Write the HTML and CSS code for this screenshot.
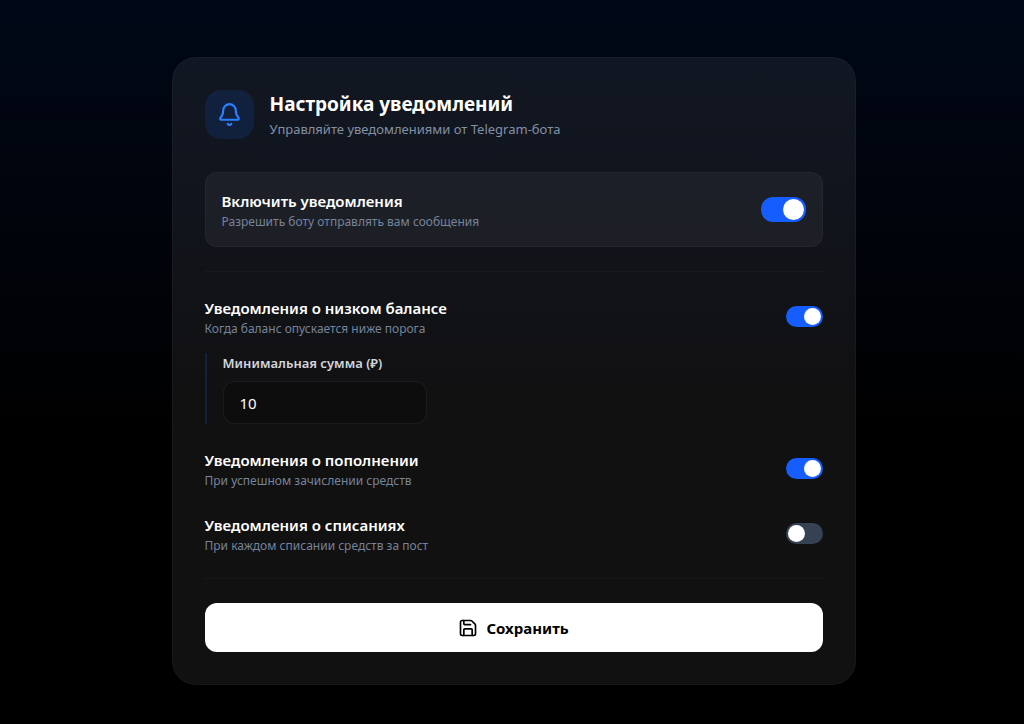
FILE: index.html
```
<!DOCTYPE html>
<html lang="ru">
<head>
    <meta charset="UTF-8">
    <meta name="viewport" content="width=device-width, initial-scale=1.0">
    <title>Настройка уведомлений</title>
    <link rel="stylesheet" href="styles.css">
</head>
<body>
<main class="card">
    <header class="header">
        <div class="header-icon">
            <svg width="25" height="25" viewBox="0 0 24 24" fill="none" stroke="currentColor" stroke-width="2" stroke-linecap="round" stroke-linejoin="round">
                <path d="M10.3 21a1.94 1.94 0 0 0 3.4 0"/>
                <path d="M3.262 15.326A1 1 0 0 0 4 17h16a1 1 0 0 0 .74-1.673C19.41 13.956 18 12.499 18 8A6 6 0 0 0 6 8c0 4.499-1.411 5.956-2.738 7.326"/>
            </svg>
        </div>
        <div>
            <h1>Настройка уведомлений</h1>
            <p class="subtitle">Управляйте уведомлениями от Telegram-бота</p>
        </div>
    </header>

    <form class="form">
        <div class="row row-main">
            <label for="enabled">
                <span class="row-title">Включить уведомления</span>
                <span class="row-text">Разрешить боту отправлять вам сообщения</span>
            </label>
            <input type="checkbox" class="toggle toggle-big" id="enabled" checked>
        </div>

        <div class="options">
            <div>
                <div class="row">
                    <label for="lowBalance">
                        <span class="row-title">Уведомления о низком балансе</span>
                        <span class="row-text">Когда баланс опускается ниже порога</span>
                    </label>
                    <input type="checkbox" class="toggle" id="lowBalance" checked>
                </div>
                <div class="threshold">
                    <label for="minAmount">Минимальная сумма (₽)</label>
                    <input type="text" inputmode="numeric" id="minAmount" value="10">
                </div>
            </div>

            <div class="row">
                <label for="deposit">
                    <span class="row-title">Уведомления о пополнении</span>
                    <span class="row-text">При успешном зачислении средств</span>
                </label>
                <input type="checkbox" class="toggle" id="deposit" checked>
            </div>

            <div class="row">
                <label for="charge">
                    <span class="row-title">Уведомления о списаниях</span>
                    <span class="row-text">При каждом списании средств за пост</span>
                </label>
                <input type="checkbox" class="toggle" id="charge">
            </div>
        </div>

        <button type="button" class="save">
            <svg width="20" height="20" viewBox="0 0 24 24" fill="none" stroke="currentColor" stroke-width="2" stroke-linecap="round" stroke-linejoin="round">
                <path d="M15.2 3a2 2 0 0 1 1.4.6l3.8 3.8a2 2 0 0 1 .6 1.4V19a2 2 0 0 1-2 2H5a2 2 0 0 1-2-2V5a2 2 0 0 1 2-2z"/>
                <path d="M17 21v-7a1 1 0 0 0-1-1H8a1 1 0 0 0-1 1v7"/>
                <path d="M7 3v4a1 1 0 0 0 1 1h7"/>
            </svg>
            Сохранить
        </button>
    </form>
</main>
</body>
</html>
```
FILE: styles.css
```
* {
    box-sizing: border-box;
}
body {
    margin: 0;
    min-height: 100vh;
    padding: 57px 16px 39px 19px;
    font-family: "Segoe UI", "Noto Sans", "Open Sans", sans-serif;
    font-size: 16px;
    line-height: 24px;
    color: #fff;
    background: linear-gradient(#000817, #000 60%) no-repeat #000;
}
h1, p {
    margin: 0;
}
.card {
    max-width: 684px;
    margin: 0 auto;
    padding: 32px;
    border: 1px solid rgba(255, 255, 255, 0.03);
    border-radius: 24px;
    background-color: rgba(255, 255, 255, 0.067);
}
.header {
    display: flex;
    align-items: center;
    gap: 16px;
    margin-bottom: 33px;
}
.header-icon {
    display: flex;
    align-items: center;
    justify-content: center;
    width: 49px;
    height: 49px;
    border-radius: 16px;
    color: #2b7fff;
    background-color: rgba(20, 80, 180, 0.2);
}
h1 {
    font-size: 19px;
    line-height: 29px;
    font-weight: 700;
}
.subtitle {
    font-size: 13px;
    line-height: 20px;
    color: #8290a6;
}
.row {
    display: flex;
    align-items: center;
    justify-content: space-between;
    gap: 16px;
}
.row-main {
    padding: 16px;
    border: 1px solid rgba(255, 255, 255, 0.03);
    border-radius: 12px;
    background-color: rgba(255, 255, 255, 0.05);
}
.row-title {
    display: block;
    font-size: 15px;
    line-height: 25px;
    font-weight: 600;
}
.row-text {
    display: block;
    font-size: 12px;
    line-height: 16px;
    color: #76839a;
}
.options {
    display: flex;
    flex-direction: column;
    gap: 24px;
    margin: 24px 0;
    padding: 24px 0;
    border-top: 1px solid rgba(255, 255, 255, 0.03);
    border-bottom: 1px solid rgba(255, 255, 255, 0.03);
}
.toggle {
    appearance: none;
    flex: none;
    display: flex;
    width: 37px;
    height: 21px;
    margin: 0;
    padding: 2px;
    border-radius: 12px;
    background-color: #364153;
}
.toggle::before {
    content: "";
    width: 17px;
    height: 17px;
    border-radius: 50%;
    background-color: #fff;
}
.toggle:checked {
    justify-content: flex-end;
    background-color: #155dfc;
}
.toggle-big {
    width: 45px;
    height: 25px;
}
.toggle-big::before {
    width: 21px;
    height: 21px;
}
.threshold {
    margin-top: 16px;
    padding-left: 16px;
    border-left: 2px solid rgba(21, 93, 252, 0.2);
}
.threshold label {
    display: block;
    margin-bottom: 8px;
    font-size: 13px;
    line-height: 20px;
    font-weight: 600;
    color: #d1d5dc;
}
.threshold input {
    display: block;
    width: 204px;
    height: 43px;
    padding: 0 16px;
    border: 1px solid rgba(255, 255, 255, 0.06);
    border-radius: 12px;
    font: inherit;
    font-size: 15px;
    color: #fff;
    background-color: rgba(0, 0, 0, 0.2);
}
.save {
    display: flex;
    align-items: center;
    justify-content: center;
    gap: 8px;
    width: 100%;
    height: 49px;
    border: none;
    border-radius: 12px;
    font: inherit;
    font-size: 15px;
    font-weight: 700;
    color: #000;
    background-color: #fff;
}
```
